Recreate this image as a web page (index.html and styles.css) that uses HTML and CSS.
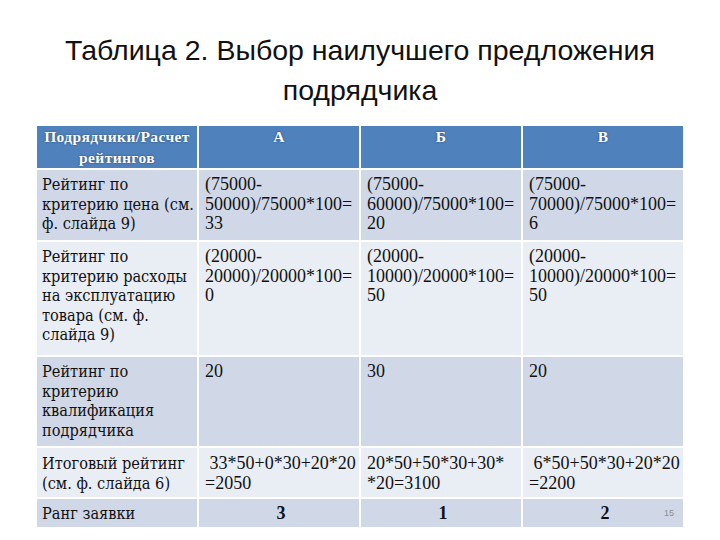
FILE: index.html
```html
<!DOCTYPE html>
<html lang="ru">
<head>
<meta charset="utf-8">
<link rel="stylesheet" href="styles.css">
</head>
<body>
<div class="slide">
  <h1 class="title">Таблица 2. Выбор наилучшего предложения<br>подрядчика</h1>
  <table class="grid">
    <colgroup><col class="c"><col class="c"><col class="c"><col class="c"></colgroup>
    <thead>
      <tr class="head">
        <th>Подрядчики/Расчет рейтингов</th>
        <th>А</th>
        <th>Б</th>
        <th>В</th>
      </tr>
    </thead>
    <tbody>
      <tr class="dark r1">
        <td class="label">Рейтинг по<br>критерию цена (см.<br>ф. слайда 9)</td>
        <td>(75000-<br>50000)/75000*100=<br>33</td>
        <td>(75000-<br>60000)/75000*100=<br>20</td>
        <td>(75000-<br>70000)/75000*100=<br>6</td>
      </tr>
      <tr class="light r2">
        <td class="label">Рейтинг по<br>критерию расходы<br>на эксплуатацию<br>товара (см. ф.<br>слайда 9)</td>
        <td>(20000-<br>20000)/20000*100=<br>0</td>
        <td>(20000-<br>10000)/20000*100=<br>50</td>
        <td>(20000-<br>10000)/20000*100=<br>50</td>
      </tr>
      <tr class="dark r3">
        <td class="label">Рейтинг по<br>критерию<br>квалификация<br>подрядчика</td>
        <td>20</td>
        <td>30</td>
        <td>20</td>
      </tr>
      <tr class="light r4">
        <td class="label">Итоговый рейтинг<br>(см. ф. слайда 6)</td>
        <td>&nbsp;33*50+0*30+20*20<br>=2050</td>
        <td>20*50+50*30+30*<br>*20=3100</td>
        <td>&nbsp;6*50+50*30+20*20<br>=2200</td>
      </tr>
      <tr class="dark r5">
        <td class="label">Ранг заявки</td>
        <td class="rank">3</td>
        <td class="rank">1</td>
        <td class="rank">2</td>
      </tr>
    </tbody>
  </table>
  <div class="pagenum">15</div>
</div>
</body>
</html>
```
FILE: styles.css
```css
html, body {
  margin: 0;
  padding: 0;
  background: #ffffff;
}
.slide {
  position: relative;
  width: 720px;
  height: 540px;
  overflow: hidden;
}
.title {
  margin: 0;
  padding-top: 30px;
  height: 97px;
  box-sizing: border-box;
  text-align: center;
  font-family: "Liberation Sans", sans-serif;
  font-weight: normal;
  font-size: 28.5px;
  line-height: 40px;
  color: #111111;
}
.grid {
  margin-left: 35px;
  margin-top: 27px;
  width: 650px;
  border-collapse: collapse;
  table-layout: fixed;
  color: #111111;
}
.c { width: 162px; }
.grid th, .grid td {
  border: 2px solid #ffffff;
  vertical-align: top;
  text-align: left;
  white-space: nowrap;
  padding: 5px 2px 0 6px;
  font-family: "Liberation Serif", serif;
  font-size: 18px;
  line-height: 19.5px;
}
.grid td.label {
  font-family: "DejaVu Serif Condensed", "DejaVu Serif", serif;
  font-size: 16.2px;
  padding-left: 5px;
}
.head th {
  background: #4f81bd;
  color: #ffffff;
  font-family: "Liberation Serif", serif;
  font-weight: bold;
  font-size: 15.5px;
  letter-spacing: 0.4px;
  line-height: 21px;
  text-align: center;
  white-space: normal;
  height: 42px;
  padding: 0 2px;
  box-sizing: border-box;
  text-shadow: 0 0 2px rgba(0,0,0,0.5);
}
.dark td { background: #d0d8e8; }
.light td { background: #e9edf4; }
.r1 td { height: 72px; box-sizing: border-box; }
.r2 td { height: 115px; box-sizing: border-box; }
.r3 td { height: 91px; box-sizing: border-box; }
.r4 td { height: 51px; box-sizing: border-box; padding-top: 6px; }
.r5 td { height: 30px; box-sizing: border-box; padding-top: 5px; }
.grid td.rank {
  text-align: center;
  font-weight: bold;
}
.pagenum {
  position: absolute;
  left: 664px;
  top: 508px;
  font-family: "Liberation Sans", sans-serif;
  font-size: 9px;
  color: #8c8c8c;
}
```
